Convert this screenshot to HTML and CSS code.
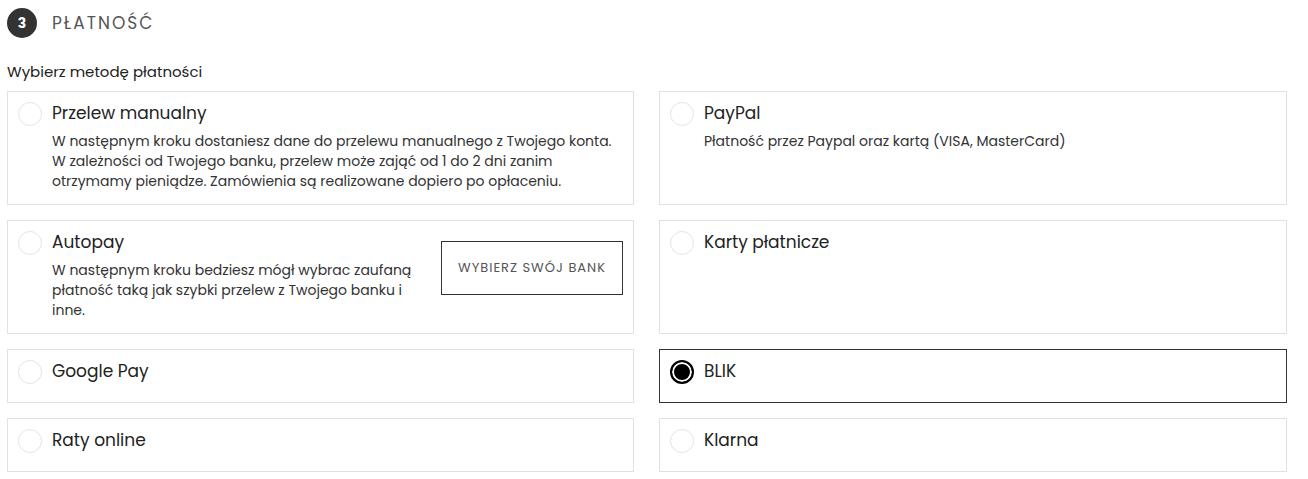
FILE: index.html
```html
<!DOCTYPE html>
<html lang="pl">
<head>
<meta charset="utf-8">
<link rel="stylesheet" href="styles.css">
</head>
<body>
<section class="payment">
  <h2 class="step-head"><span class="step-num">3</span><span class="step-title">PŁATNOŚĆ</span></h2>
  <p class="lead">Wybierz metodę płatności</p>
  <div class="grid">
    <label class="card">
      <span class="radio"></span>
      <div class="body">
        <div class="title">Przelew manualny</div>
        <div class="desc">W następnym kroku dostaniesz dane do przelewu manualnego z Twojego konta.<br>W zależności od Twojego banku, przelew może zająć od 1 do 2 dni zanim<br>otrzymamy pieniądze. Zamówienia są realizowane dopiero po opłaceniu.</div>
      </div>
    </label>
    <label class="card">
      <span class="radio"></span>
      <div class="body">
        <div class="title">PayPal</div>
        <div class="desc">Płatność przez Paypal oraz kartą (VISA, MasterCard)</div>
      </div>
    </label>
    <label class="card">
      <span class="radio"></span>
      <div class="body body-split">
        <div class="body-main">
          <div class="title">Autopay</div>
          <div class="desc">W następnym kroku bedziesz mógł wybrac zaufaną<br>płatność taką jak szybki przelew z Twojego banku i<br>inne.</div>
        </div>
        <button class="bank-btn" type="button">WYBIERZ SWÓJ BANK</button>
      </div>
    </label>
    <label class="card">
      <span class="radio"></span>
      <div class="body">
        <div class="title">Karty płatnicze</div>
      </div>
    </label>
    <label class="card">
      <span class="radio"></span>
      <div class="body">
        <div class="title">Google Pay</div>
      </div>
    </label>
    <label class="card card-active">
      <span class="radio radio-on"></span>
      <div class="body">
        <div class="title">BLIK</div>
      </div>
    </label>
    <label class="card">
      <span class="radio"></span>
      <div class="body">
        <div class="title">Raty online</div>
      </div>
    </label>
    <label class="card">
      <span class="radio"></span>
      <div class="body">
        <div class="title">Klarna</div>
      </div>
    </label>
  </div>
</section>
</body>
</html>
```

FILE: styles.css
```css
* { box-sizing: border-box; }
html, body { margin: 0; padding: 0; background: #fff; }
body {
  font-family: "Poppins", "Noto Sans", "DejaVu Sans", sans-serif;
  font-weight: 400;
  color: #222;
}
.payment {
  width: 1294px;
  padding: 7px 0 0 7px;
}
.step-head {
  display: flex;
  align-items: center;
  gap: 15px;
  margin: 0;
  height: 32px;
  font-weight: 400;
}
.step-num {
  width: 30px;
  height: 30px;
  border-radius: 50%;
  background: #333;
  color: #fff;
  font-size: 14px;
  font-weight: 700;
  display: flex;
  align-items: center;
  justify-content: center;
}
.step-title {
  font-size: 17px;
  letter-spacing: 2px;
  color: #555;
}
.lead {
  margin: 22px 0 0 0;
  font-size: 15px;
  line-height: 22px;
  color: #222;
}
.grid {
  margin-top: 8px;
  display: grid;
  grid-template-columns: 627px 628px;
  column-gap: 25px;
  row-gap: 15px;
}
.card {
  display: flex;
  align-items: flex-start;
  gap: 10px;
  border: 1px solid #e1e1e1;
  padding: 9px 10px 13px 10px;
  cursor: pointer;
}
.card-active { border-color: #333; }
.radio {
  flex: none;
  width: 24px;
  height: 24px;
  border-radius: 50%;
  border: 1px solid #e4e4e4;
  margin-top: 1px;
}
.radio-on {
  border: 2px solid #000;
  background: #000;
  box-shadow: inset 0 0 0 2px #fff;
}
.body { flex: 1; min-width: 0; }
.body-split { display: flex; justify-content: space-between; align-items: flex-start; }
.title {
  font-size: 17px;
  line-height: 24px;
  margin-bottom: 6px;
  color: #222;
}
.desc {
  font-size: 14px;
  line-height: 20px;
  color: #333;
}
.bank-btn {
  flex: none;
  margin-top: 11px;
  width: 182px;
  height: 54px;
  border: 1px solid #333;
  background: #fff;
  font-family: inherit;
  font-weight: 400;
  font-size: 13px;
  letter-spacing: 1px;
  color: #555;
  padding: 0;
}
```
